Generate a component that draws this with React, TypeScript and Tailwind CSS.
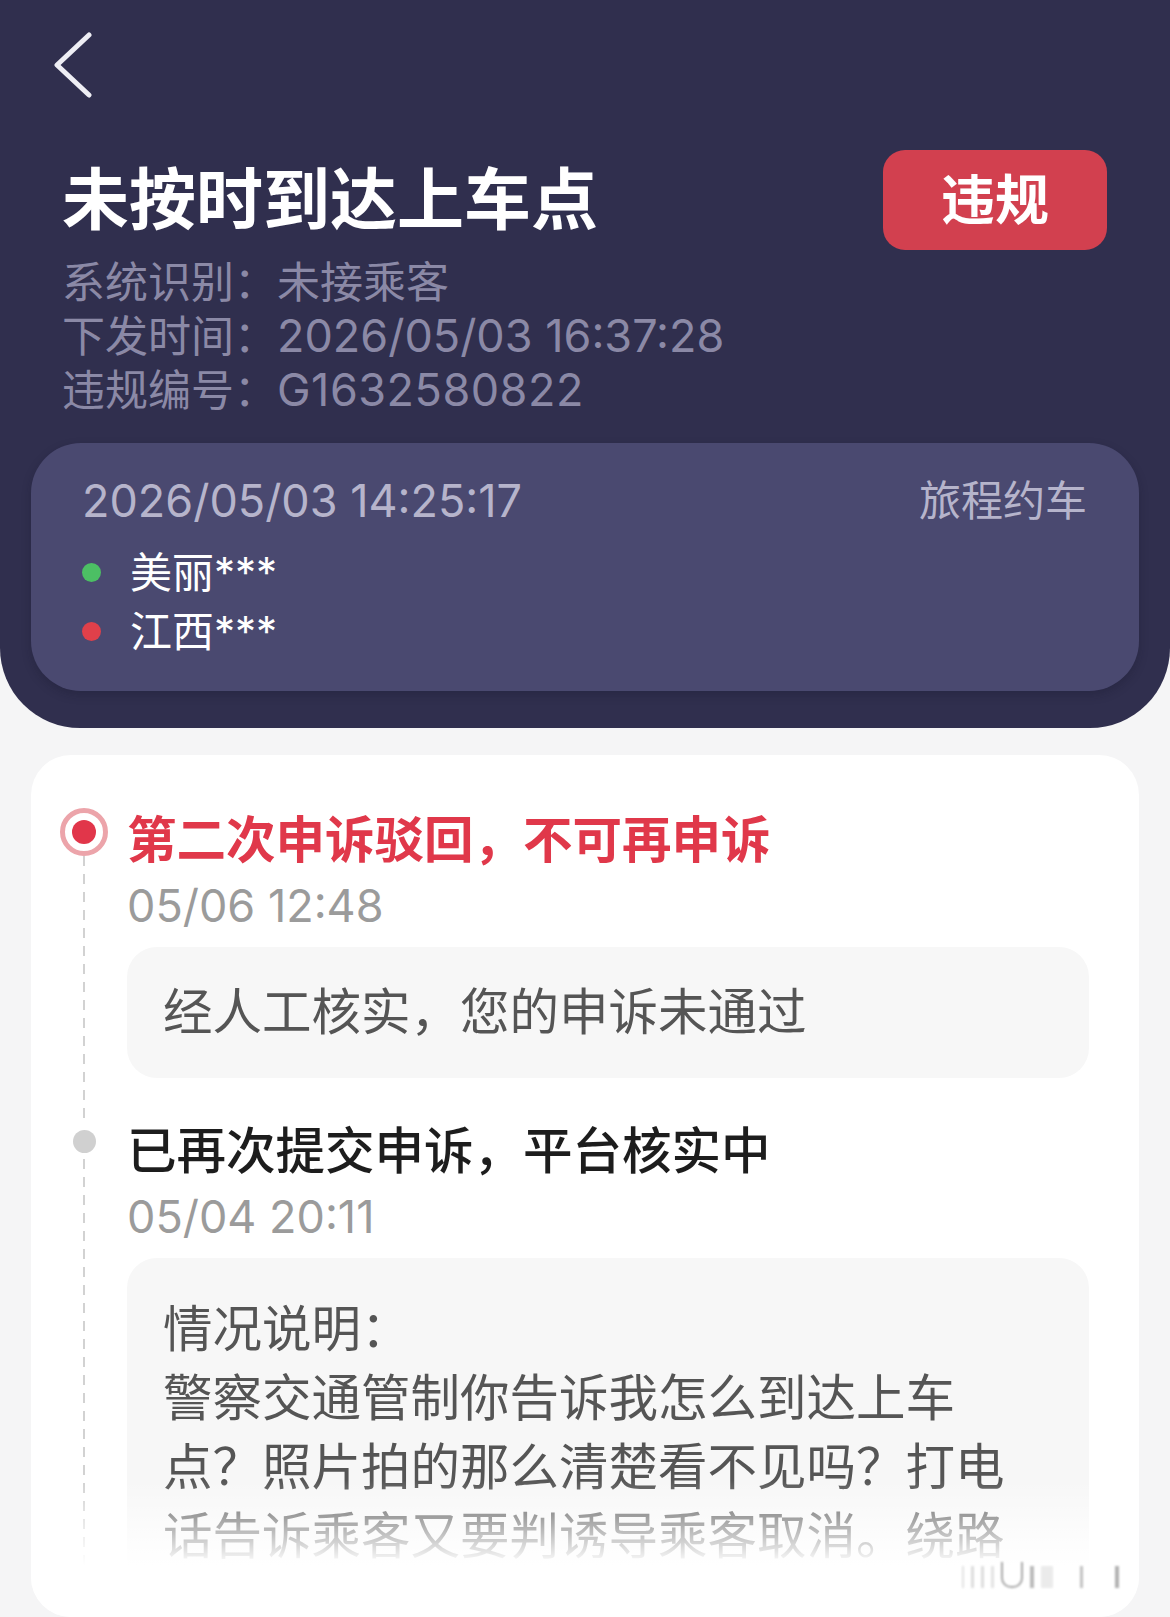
function Chevron() {
    return (
        <svg width="40" height="70" viewBox="0 0 40 70" fill="none">
            <polyline points="35,5 3,35 35,65" stroke="#eeeef4" strokeWidth="5" strokeLinecap="round" strokeLinejoin="round" />
        </svg>
    )
}

function Dash() {
    return <div className="w-[2px] flex-1 bg-[repeating-linear-gradient(to_bottom,#d2d2d2_0px,#d2d2d2_10px,transparent_10px,transparent_18px)]"></div>
}

export default function App() {
    return (
        <div className="w-[1170px] h-[1617px] bg-[#f5f5f6] flex flex-col overflow-hidden relative font-['Inter','Noto_Sans_CJK_SC',sans-serif]">
            {/* header */}
            <section className="bg-[#302f4e] rounded-b-[80px] pb-[37px]">
                <div className="pt-[30px] pl-[54px] h-[100px]">
                    <Chevron />
                </div>
                <div className="mt-[50px] h-[100px] flex items-center justify-between pl-[62px] pr-[63px]">
                    <h1 className="text-[67px] leading-[80px] font-bold text-white">未按时到达上车点</h1>
                    <div className="w-[224px] h-[100px] rounded-[22px] bg-[#d2404f] flex items-center justify-center text-white text-[54px] font-bold">违规</div>
                </div>
                <div className="mt-[6px] pl-[62px] text-[43px] leading-[53px] text-[#8b89a6]">
                    <p>系统识别：未接乘客</p>
                    <p>下发时间：<span className="text-[45px]">2026/05/03 16:37:28</span></p>
                    <p>违规编号：<span className="text-[45px] tracking-[0.5px]">G1632580822</span></p>
                </div>
                <div className="mt-[26px] mx-[31px] h-[248px] rounded-[50px] bg-[#4a4970] shadow-[0_4px_10px_rgba(20,20,40,0.25)] pt-[30px] pl-[51px] pr-[52px]">
                    <div className="flex items-center justify-between leading-[56px] text-[#b6b4cb]">
                        <span className="text-[45px]">2026/05/03 14:25:17</span>
                        <span className="text-[42px]">旅程约车</span>
                    </div>
                    <div className="mt-[14px] text-white text-[42px]">
                        <div className="h-[59px] flex items-center">
                            <span className="w-[19px] h-[19px] rounded-full bg-[#4cbf64] mr-[29px]"></span>
                            <span>美丽***</span>
                        </div>
                        <div className="h-[59px] flex items-center">
                            <span className="w-[19px] h-[19px] rounded-full bg-[#e0404a] mr-[29px]"></span>
                            <span>江西***</span>
                        </div>
                    </div>
                </div>
            </section>

            {/* timeline */}
            <section className="mt-[27px] mx-[31px] flex-1 bg-white rounded-[40px] pt-[53px] pl-[29px] pr-[50px] relative overflow-hidden">
                <div className="flex">
                    <div className="w-[48px] flex flex-col items-center">
                        <div className="w-[48px] h-[48px] rounded-full border-[5px] border-[#eca4aa] bg-white flex items-center justify-center">
                            <div className="w-[24px] h-[24px] rounded-full bg-[#e1364a]"></div>
                        </div>
                        <Dash />
                    </div>
                    <div className="ml-[19px] flex-1 pt-[2px] pb-[43px]">
                        <p className="text-[49.5px] leading-[60px] font-bold text-[#e0384a]">第二次申诉驳回，不可再申诉</p>
                        <p className="mt-[10px] text-[45px] leading-[52px] text-[#9b9b9b]">05/06 12:48</p>
                        <div className="mt-[15px] rounded-[30px] bg-[#f7f7f7] py-[35px] pl-[36px] text-[49.5px] leading-[61px] text-[#555555]">
                            经人工核实，您的申诉未通过
                        </div>
                    </div>
                </div>
                <div className="flex">
                    <div className="w-[48px] flex flex-col items-center">
                        <div className="mt-[9px] w-[23px] h-[23px] rounded-full bg-[#d0d0d0]"></div>
                        <div className="h-[6px]"></div>
                        <Dash />
                    </div>
                    <div className="ml-[19px] flex-1">
                        <p className="text-[49.5px] leading-[60px] font-medium text-[#1d1d1d]">已再次提交申诉，平台核实中</p>
                        <p className="mt-[10px] text-[45px] leading-[52px] text-[#9b9b9b]">05/04 20:11</p>
                        <div className="mt-[15px] rounded-[30px] bg-[#f7f7f7] pt-[37px] pb-[40px] pl-[36px] pr-[56px] text-[49.5px] leading-[69px] text-[#555555]">
                            <p>情况说明：</p>
                            <p>警察交通管制你告诉我怎么到达上车点？照片拍的那么清楚看不见吗？打电话告诉乘客又要判诱导乘客取消。绕路</p>
                        </div>
                    </div>
                </div>
                {/* fade */}
                <div className="absolute inset-x-0 bottom-0 h-[137px] bg-[linear-gradient(to_bottom,rgba(255,255,255,0)_0%,#ffffff_62%)]"></div>
            </section>

            {/* watermark */}
            <div className="absolute left-[962px] top-[1562px] h-[26px] flex items-end gap-[7px] opacity-50 blur-[1px]">
                <span className="w-[2px] h-[22px] bg-[#c8c8c8]"></span>
                <span className="w-[3px] h-[22px] bg-[#bdbdbd]"></span>
                <span className="w-[3px] h-[22px] bg-[#bdbdbd]"></span>
                <span className="w-[3px] h-[22px] bg-[#c8c8c8]"></span>
                <span className="w-[22px] h-[26px] border-b-2 border-x-2 border-[#555] rounded-b-[10px]"></span>
                <span className="w-[4px] h-[22px] bg-[#777]"></span>
                <span className="w-[12px] h-[22px] bg-[#d8d8d8]"></span>
                <span className="w-[3px] h-[22px] bg-[#888] ml-[20px]"></span>
                <span className="w-[4px] h-[22px] bg-[#666] ml-[25px]"></span>
            </div>
        </div>
    )
}
